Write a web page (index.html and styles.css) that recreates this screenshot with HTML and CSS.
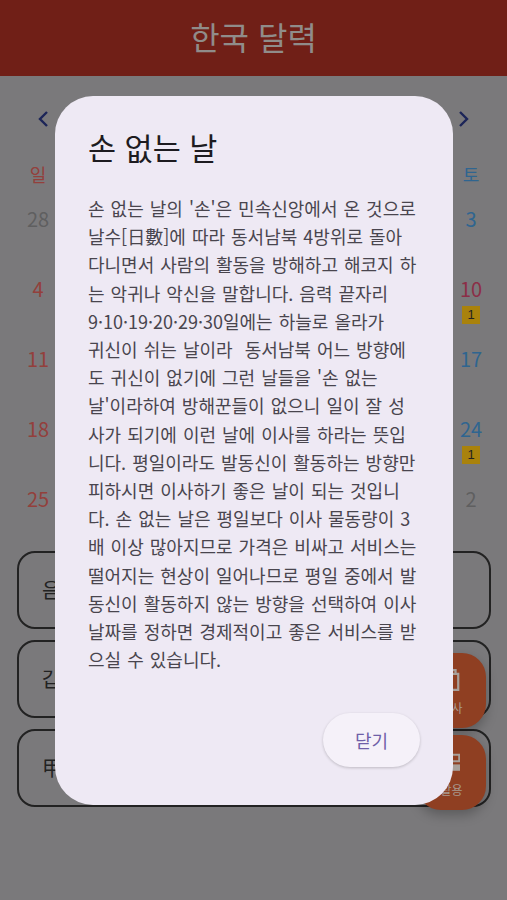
FILE: index.html
```html
<!DOCTYPE html>
<html lang="ko">
<head>
<meta charset="utf-8">
<title>한국 달력</title>
<link rel="stylesheet" href="styles.css">
</head>
<body>
<div class="app">
  <header class="appbar">한국 달력</header>
  <div class="month">
    <svg class="chev" viewBox="0 0 12 18"><path d="M10 2 3 9l7 7"/></svg>
    <svg class="chev" viewBox="0 0 12 18"><path d="M2 2l7 7-7 7"/></svg>
  </div>
  <div class="cal">
    <div class="wk head"><span class="sun">일</span><span class="sat">토</span></div>
    <div class="wk"><span class="mute">28</span><span class="sat">3</span></div>
    <div class="wk"><span class="sun">4</span><span class="red">10<b>1</b></span></div>
    <div class="wk"><span class="sun">11</span><span class="sat">17</span></div>
    <div class="wk"><span class="sun">18</span><span class="sat">24<b>1</b></span></div>
    <div class="wk"><span class="sun">25</span><span class="mute">2</span></div>
  </div>
  <div class="rows">
    <div class="row">음력</div>
    <div class="row">갑자</div>
    <div class="row">甲子</div>
  </div>
</div>
<div class="fabs">
  <div class="fab">
    <svg class="fab-ico" viewBox="0 0 18 26"><path d="M2 6h14v18H2zM5 6V2h8v4"/></svg>
    <span>이사</span>
  </div>
  <div class="fab">
    <svg class="fab-ico" viewBox="0 0 20 22"><path d="M1 2h18v8H1z"/><path class="solid" d="M0 14h20v8H0z"/></svg>
    <span>활용</span>
  </div>
</div>
<section class="dialog">
  <h2>손 없는 날</h2>
  <p>손 없는 날의 '손'은 민속신앙에서 온 것으로<br>날수[日數]에 따라 동서남북 4방위로 돌아<br>다니면서 사람의 활동을 방해하고 해코지 하<br>는 악귀나 악신을 말합니다. 음력 끝자리<br>9·10·19·20·29·30일에는 하늘로 올라가<br>귀신이 쉬는 날이라&nbsp; 동서남북 어느 방향에<br>도 귀신이 없기에 그런 날들을 '손 없는<br>날'이라하여 방해꾼들이 없으니 일이 잘 성<br>사가 되기에 이런 날에 이사를 하라는 뜻입<br>니다. 평일이라도 발동신이 활동하는 방향만<br>피하시면 이사하기 좋은 날이 되는 것입니<br>다. 손 없는 날은 평일보다 이사 물동량이 3<br>배 이상 많아지므로 가격은 비싸고 서비스는<br>떨어지는 현상이 일어나므로 평일 중에서 발<br>동신이 활동하지 않는 방향을 선택하여 이사<br>날짜를 정하면 경제적이고 좋은 서비스를 받<br>으실 수 있습니다.</p>
  <div class="actions"><button class="close">닫기</button></div>
</section>
</body>
</html>
```
FILE: styles.css
```css
* { box-sizing: border-box; }
html, body { margin: 0; height: 100%; }
body {
  position: relative;
  width: 507px;
  height: 900px;
  overflow: hidden;
  background: #7a797b;
  font-family: "Noto Sans CJK KR", "Noto Sans", sans-serif;
}
.appbar {
  height: 76px;
  background: #701f17;
  color: #908c8a;
  font-size: 32px;
  line-height: 72px;
  text-align: center;
}
.month {
  display: flex;
  justify-content: space-between;
  padding: 34px 37px 0;
  height: 58px;
}
.chev { width: 12px; height: 18px; }
.chev path { fill: none; stroke: #1c2558; stroke-width: 2.4; }
.cal { padding: 27px 0 0; }
.wk {
  display: flex;
  justify-content: space-between;
  padding: 0 13px 0 15px;
  height: 70px;
  font-size: 20px;
  line-height: 26px;
}
.wk.head { height: 45px; font-size: 18px; }
.wk span { position: relative; width: 46px; text-align: center; }
.wk b {
  position: absolute;
  left: 14px;
  top: 30px;
  width: 18px;
  height: 18px;
  background: #a9820c;
  color: #222;
  font: 13px/18px "Liberation Sans", sans-serif;
}
.sun { color: #93403c; }
.red { color: #8c2e47; }
.sat { color: #2f6590; }
.mute { color: #5f5f60; }
.rows {
  display: flex;
  flex-direction: column;
  gap: 11px;
  padding: 0 16px 0 17px;
  margin-top: -5px;
}
.row {
  height: 78px;
  border: 2px solid #222;
  border-radius: 18px;
  padding-left: 23px;
  font-size: 20px;
  line-height: 74px;
  color: #222;
}
.fabs {
  position: absolute;
  left: 417px;
  top: 653px;
  display: flex;
  flex-direction: column;
  gap: 7px;
}
.fab {
  width: 69px;
  height: 75px;
  border-radius: 24px;
  background: #8f3f22;
  box-shadow: 0 5px 12px rgba(0, 0, 0, .25);
  display: flex;
  flex-direction: column;
  align-items: center;
  padding-top: 14px;
  gap: 8px;
  color: #a8998f;
  font-size: 12px;
  line-height: 14px;
}
.fab-ico { width: 16px; height: 26px; }
.fab-ico path { fill: none; stroke: #a8a09a; stroke-width: 2.5; }
.fab-ico path.solid { fill: #a8a09a; stroke: none; }
.dialog {
  position: absolute;
  left: 55px;
  top: 96px;
  width: 398px;
  height: 709px;
  border-radius: 38px;
  background: #eee9f4;
  padding: 28px 33px 0;
}
.dialog h2 {
  margin: 0;
  font-size: 30.5px;
  font-weight: 400;
  line-height: 46px;
  color: #1d1b20;
}
.dialog p {
  margin: 24px 0 0;
  font-size: 18px;
  line-height: 28.2px;
  word-spacing: 1px;
  color: #49454e;
  white-space: nowrap;
}
.actions { display: flex; justify-content: flex-end; margin-top: 40px; }
.close {
  width: 97px;
  height: 54px;
  border: 0;
  border-radius: 27px;
  background: #f5f1f9;
  color: #6f5fa8;
  font: 18px "Noto Sans CJK KR", sans-serif;
  box-shadow: 0 1px 3px rgba(0, 0, 0, .2);
}
```
